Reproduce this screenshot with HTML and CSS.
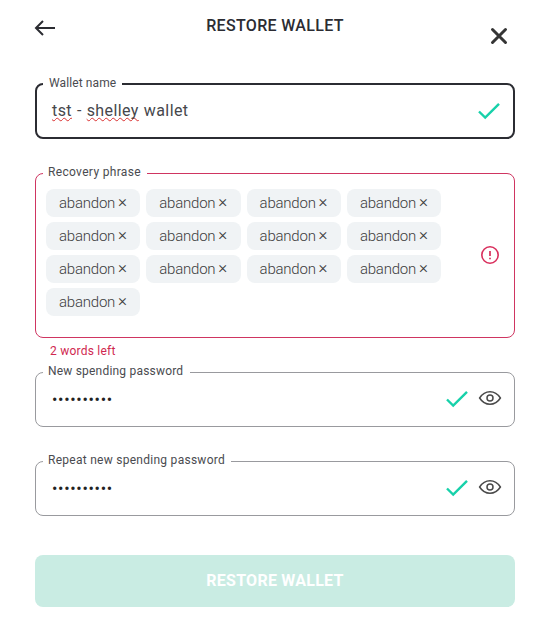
FILE: index.html
```
<!DOCTYPE html>
<html lang="en">
<head>
<meta charset="utf-8">
<title>Restore wallet</title>
<link rel="stylesheet" href="styles.css">
</head>
<body>
<svg class="defs" aria-hidden="true">
  <symbol id="check" viewBox="0 0 24 20"><path d="M2 10.5 8.2 16.6 22 2.8" fill="none" stroke="#17d1aa" stroke-width="2.4"/></symbol>
  <symbol id="eye" viewBox="0 0 24 16"><path d="M1.6 8C7 -.4 17 -.4 22.4 8 17 16.4 7 16.4 1.6 8Z" fill="none" stroke="#4a4a4a" stroke-width="1.5"/><circle cx="12" cy="8" r="3" fill="none" stroke="#4a4a4a" stroke-width="1.5"/></symbol>
</svg>
<main class="dialog">
  <header class="header">
    <svg class="back" viewBox="0 0 22 18"><path d="M9 2 2 9l7 7M2 9h19" fill="none" stroke="#2b2c32" stroke-width="2"/></svg>
    <h1 class="title">RESTORE WALLET</h1>
    <svg class="close" viewBox="0 0 18 18"><path d="m2.5 2.5 13 13m0-13-13 13" fill="none" stroke="#353535" stroke-width="3" stroke-linecap="round"/></svg>
  </header>
  <section class="field field-name">
    <label class="label label-name">Wallet name</label>
    <div class="value"><span class="typo">tst</span> - <span class="typo">shelley</span> wallet</div>
    <svg class="check"><use href="#check"/></svg>
  </section>
  <section class="field field-phrase">
    <label class="label label-phrase">Recovery phrase</label>
    <div class="chips">
      <span class="chip"><span class="word">abandon</span><span class="x">×</span></span>
      <span class="chip"><span class="word">abandon</span><span class="x">×</span></span>
      <span class="chip"><span class="word">abandon</span><span class="x">×</span></span>
      <span class="chip"><span class="word">abandon</span><span class="x">×</span></span>
      <span class="chip"><span class="word">abandon</span><span class="x">×</span></span>
      <span class="chip"><span class="word">abandon</span><span class="x">×</span></span>
      <span class="chip"><span class="word">abandon</span><span class="x">×</span></span>
      <span class="chip"><span class="word">abandon</span><span class="x">×</span></span>
      <span class="chip"><span class="word">abandon</span><span class="x">×</span></span>
      <span class="chip"><span class="word">abandon</span><span class="x">×</span></span>
      <span class="chip"><span class="word">abandon</span><span class="x">×</span></span>
      <span class="chip"><span class="word">abandon</span><span class="x">×</span></span>
      <span class="chip"><span class="word">abandon</span><span class="x">×</span></span>
    </div>
    <svg class="alert" viewBox="0 0 20 20"><circle cx="10" cy="10" r="8.2" fill="none" stroke="#d92f5d" stroke-width="1.6"/><path d="M10 6v5M10 12.7v1.6" stroke="#d92f5d" stroke-width="1.7"/></svg>
  </section>
  <p class="error">2 words left</p>
  <section class="field">
    <label class="label label-new">New spending password</label>
    <div class="value dots">••••••••••</div>
    <svg class="check"><use href="#check"/></svg>
    <svg class="eye"><use href="#eye"/></svg>
  </section>
  <section class="field field-repeat">
    <label class="label label-repeat">Repeat new spending password</label>
    <div class="value dots">••••••••••</div>
    <svg class="check"><use href="#check"/></svg>
    <svg class="eye"><use href="#eye"/></svg>
  </section>
  <button class="submit">RESTORE WALLET</button>
</main>
</body>
</html>
```
FILE: styles.css
```
* { box-sizing: border-box; }
body { margin: 0; background: #fff; color: #2b2c32; font-family: Roboto, "Liberation Sans", sans-serif; }
svg { display: block; flex: none; }
.defs { position: absolute; width: 0; height: 0; }
.dialog { width: 480px; margin: 0 28px 0 35px; }
.header { display: grid; grid-template-columns: 22px 1fr 18px; height: 83px; padding-right: 7px; }
.back { width: 22px; height: 18px; margin: 19px 0 0 -1px; }
.close { width: 18px; height: 18px; margin-top: 27px; }
.title { margin: 16px 0 0 3px; text-align: center; font-size: 16px; line-height: 20px; font-weight: 500; letter-spacing: .33px; }
.field { position: relative; display: flex; align-items: center; height: 55px; border: 1px solid #999a9e; border-radius: 8px; padding: 0 12px 0 16px; }
.field-name { height: 56px; border: 2px solid #2b2c32; padding: 0 12px 0 15px; }
.field-phrase { height: 165px; margin-top: 34px; border-color: #cf3561; padding: 0 14px 0 10px; }
.field-repeat { margin-top: 34px; }
.label { position: absolute; left: 7px; top: -10px; padding: 0 6px 0 5px; background: #fff; font-size: 12px; line-height: 16px; color: #4a4b50; white-space: nowrap; }
.label-name { top: -10px; left: 6px; padding-left: 6px; letter-spacing: .1px; }
.label-phrase { letter-spacing: .33px; }
.label-new { letter-spacing: .2px; padding-right: 7px; }
.label-repeat { letter-spacing: .27px; }
.value { flex: 1; font-size: 16px; line-height: 20px; letter-spacing: .42px; word-spacing: .5px; color: #46474c; font-weight: 400; white-space: nowrap; }
.typo { text-decoration: underline wavy #d93030 .8px; text-underline-offset: 1px; text-decoration-skip-ink: none; }
.dots { font-weight: 400; letter-spacing: .68px; color: #222; }
.check { width: 24px; height: 20px; }
.eye { width: 24px; height: 16px; margin: -3px 0 0 9px; }
.field:not(.field-name) .check { margin-top: -2px; }
.chips { flex: 1; align-self: flex-start; display: grid; grid-template-columns: repeat(4, 94.3px); gap: 5px 6px; padding-top: 15px; }
.chip { display: flex; align-items: center; height: 28px; padding-left: 13px; border-radius: 8px; background: #f0f3f5; color: #3c3c3c; font-size: 15px; font-weight: 300; }
.word { width: 59px; letter-spacing: -.22px; }
.x { font-size: 17px; font-weight: 300; margin-top: -4px; }
.alert { width: 20px; height: 20px; margin-top: -2px; }
.error { margin: 0; height: 34px; padding: 5px 0 0 15px; font-size: 12px; line-height: 16px; color: #d02850; letter-spacing: .23px; }
.submit { display: block; width: 100%; height: 52px; margin-top: 39px; padding: 0; border: 0; border-radius: 8px; background: #c9ece3; color: #fff; font: 700 16px/20px Roboto, sans-serif; letter-spacing: .25px; }
```
